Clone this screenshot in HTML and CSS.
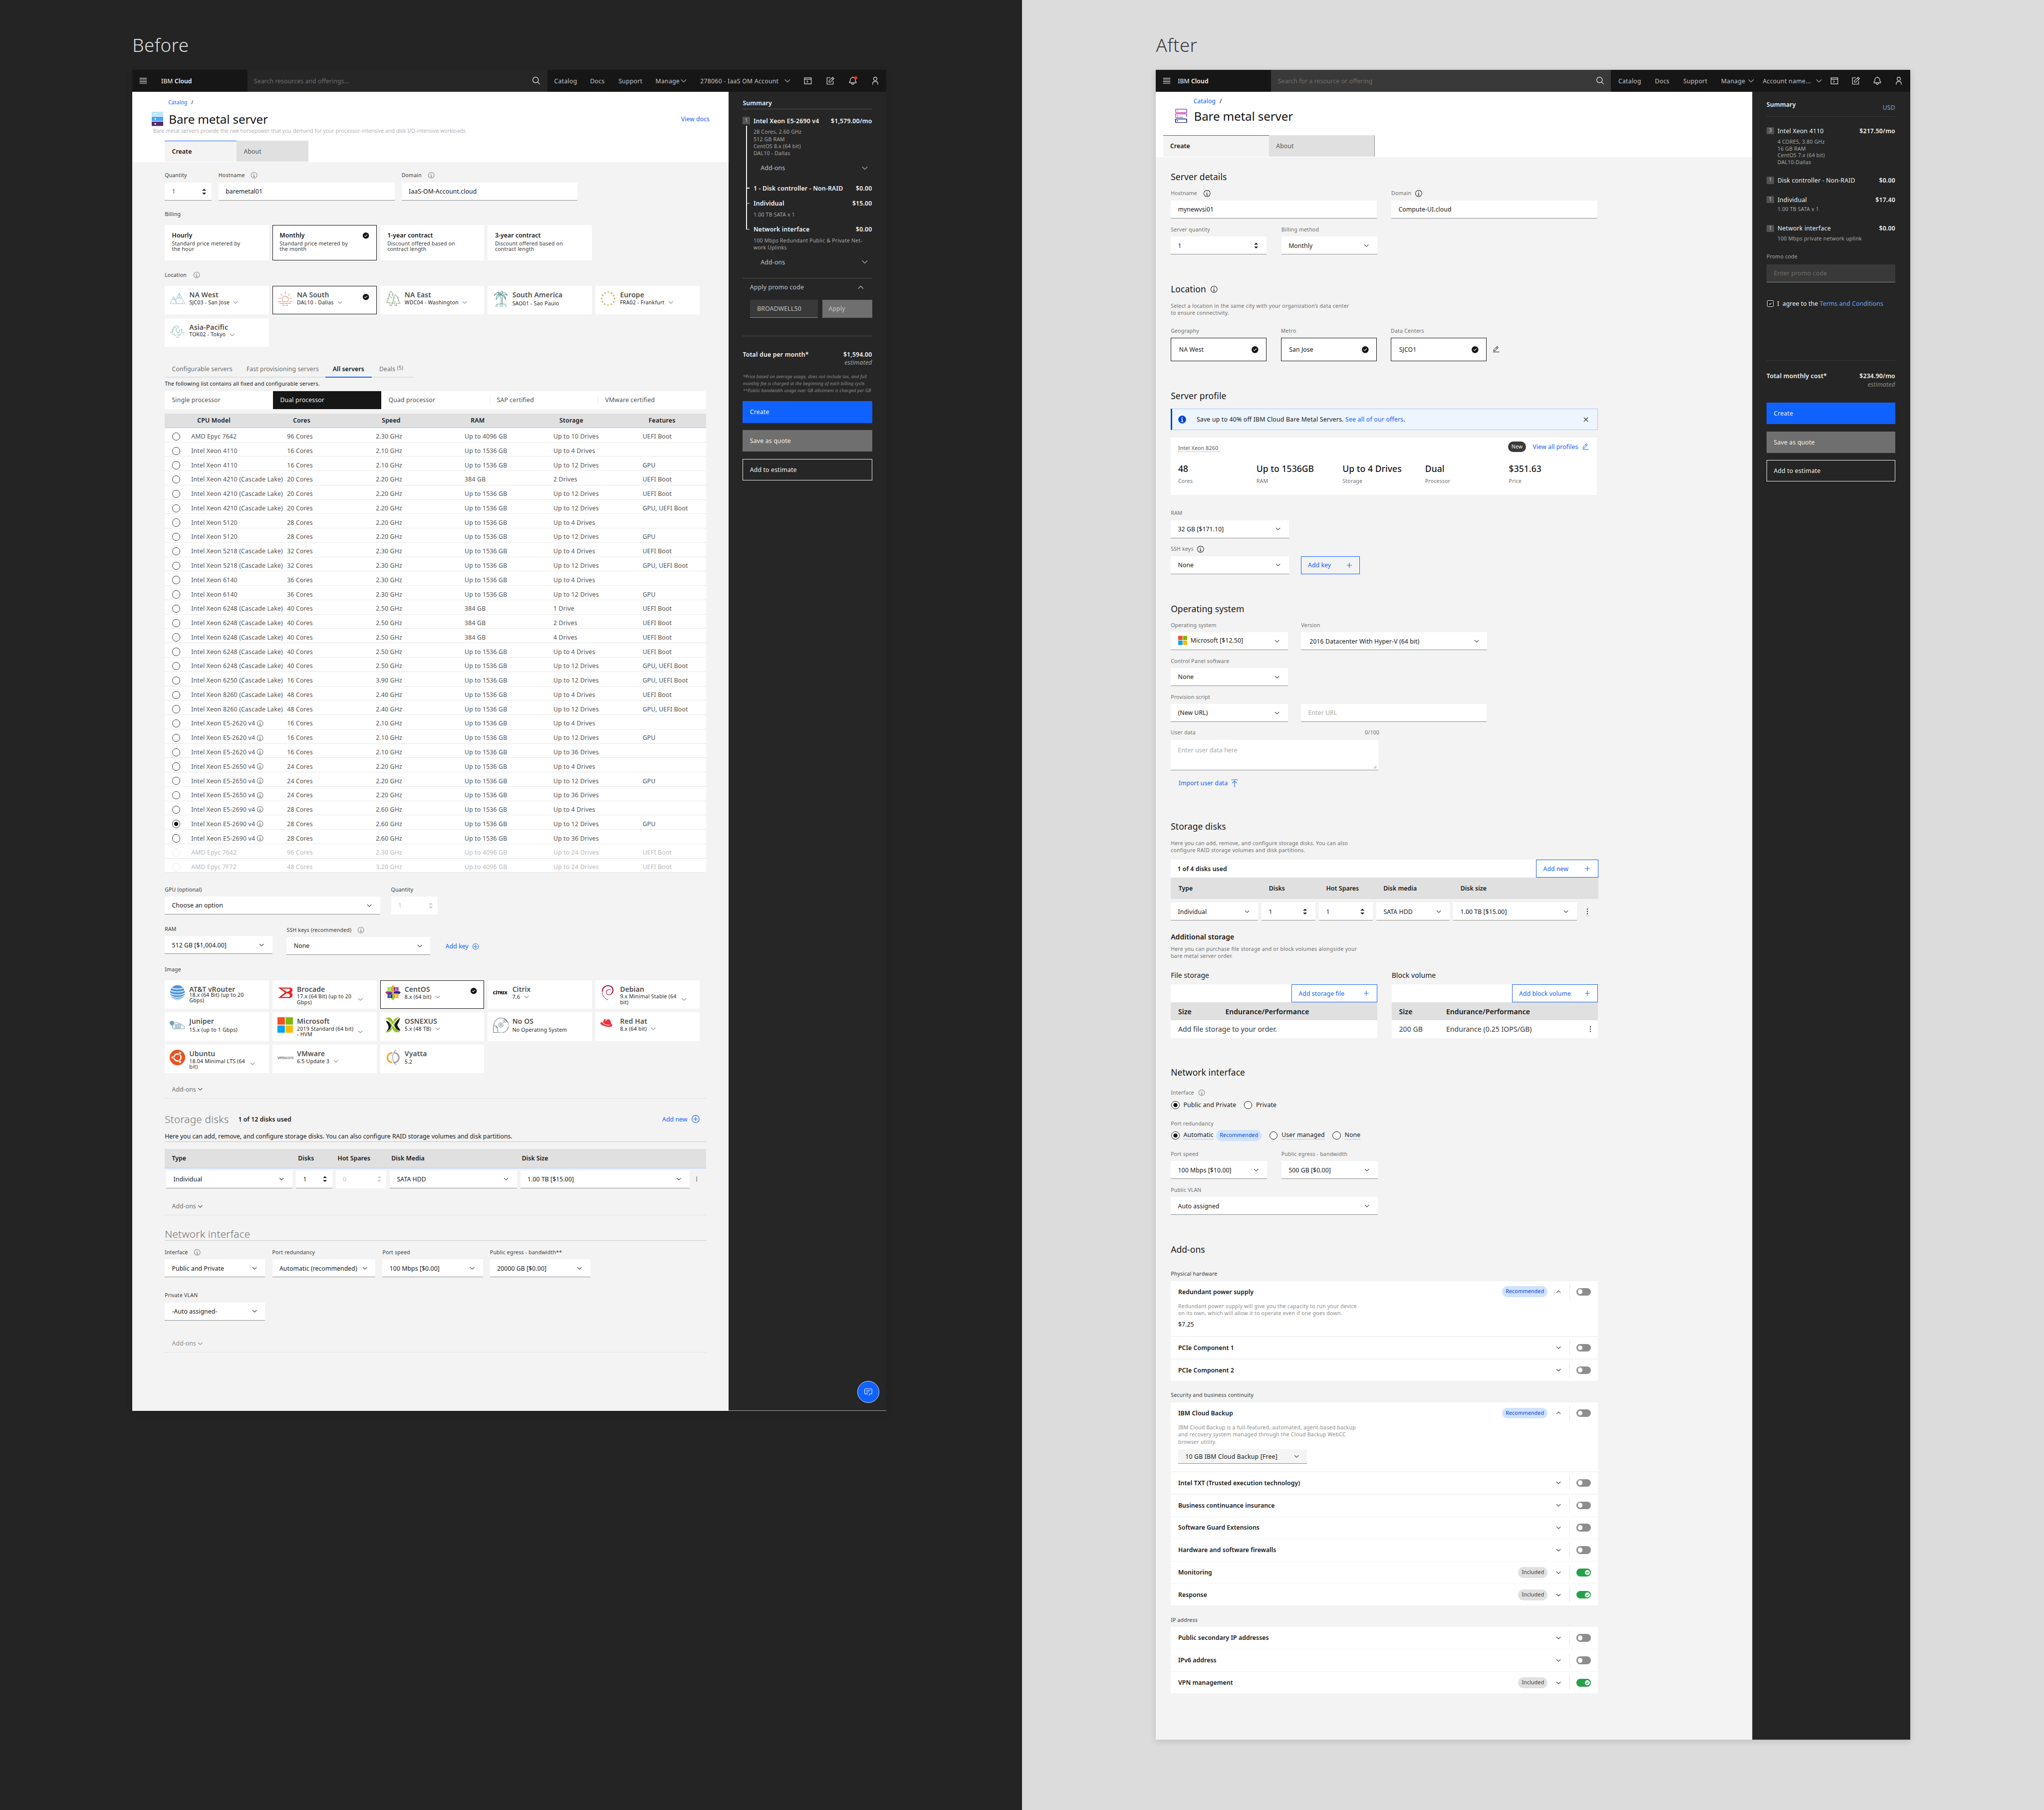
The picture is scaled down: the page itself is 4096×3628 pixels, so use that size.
FILE: index.html
```html
<!DOCTYPE html>
<html lang="en">
<head>
<meta charset="utf-8">
<title>Bare metal server – before and after</title>
<link rel="stylesheet" href="styles.css">
</head>
<body>
<svg class="defs" aria-hidden="true">
  <defs>
    <linearGradient id="pinkviolet" x1="0" y1="1" x2="1" y2="0"><stop offset="0" stop-color="#ee5396"/><stop offset="1" stop-color="#8a3ffc"/></linearGradient>
  </defs>
  <symbol id="down" viewBox="0 0 32 32"><path d="M16 22 6 12l1.4-1.4 8.6 8.6 8.6-8.6L26 12z"/></symbol>
  <symbol id="up" viewBox="0 0 32 32"><path d="M16 10 26 20l-1.4 1.4-8.6-8.6-8.6 8.6L6 20z"/></symbol>
  <symbol id="info" viewBox="0 0 32 32"><path d="M17 22v-8h-4v2h2v6h-3v2h8v-2zM16 8a1.5 1.5 0 1 0 1.5 1.5A1.5 1.5 0 0 0 16 8zM16 30a14 14 0 1 1 14-14 14 14 0 0 1-14 14zm0-26a12 12 0 1 0 12 12A12 12 0 0 0 16 4z"/></symbol>
  <symbol id="info-filled" viewBox="0 0 32 32"><path fill-rule="evenodd" d="M16 2a14 14 0 1 0 14 14A14 14 0 0 0 16 2zm0 5a2 2 0 1 1-2 2 2 2 0 0 1 2-2zm4.500 17.500h-9v-2.500h3.200v-6.500h-2.200V13H17.500v9h3z"/></symbol>
  <symbol id="check" viewBox="0 0 32 32"><path fill-rule="evenodd" d="M16 2a14 14 0 1 0 14 14A14 14 0 0 0 16 2zm-2 19.600-5-5 1.600-1.600L14 18.400 21.400 11l1.600 1.600z"/></symbol>
  <symbol id="carets" viewBox="0 0 12 18"><path d="M0 6 6 .500 12 6zM0 12l6 5.500L12 12z"/></symbol>
  <symbol id="search" viewBox="0 0 32 32"><path d="m29 27.600-7.600-7.600a11 11 0 1 0-1.400 1.400l7.600 7.600zM4 13a9 9 0 1 1 9 9 9 9 0 0 1-9-9z"/></symbol>
  <symbol id="menu" viewBox="0 0 32 32"><path d="M3 6h26v2H3zM3 12h26v2H3zM3 18h26v2H3zM3 24h26v2H3z"/></symbol>
  <symbol id="terminal" viewBox="0 0 32 32"><path d="M4 5h24v22H4zM4 10h24M12 15l4 3.500-4 3.500" fill="none" stroke="currentColor" stroke-width="2"/></symbol>
  <symbol id="note" viewBox="0 0 32 32"><path d="M16 5H4v23h22V17M11 21v-5L24.500 3l4.500 4.500L16 21zM21 6.500l4.500 4.500" fill="none" stroke="currentColor" stroke-width="2"/></symbol>
  <symbol id="bell" viewBox="0 0 32 32"><path d="M28.700 19.300 26 16.600V13a10 10 0 0 0-9-9.950V1h-2v2.050A10 10 0 0 0 6 13v3.600l-2.700 2.700A1 1 0 0 0 3 20v3a1 1 0 0 0 1 1h7v1a5 5 0 0 0 10 0v-1h7a1 1 0 0 0 1-1v-3a1 1 0 0 0-.300-.700zM19 25a3 3 0 0 1-6 0v-1h6zm8-3H5v-1.600l2.700-2.700A1 1 0 0 0 8 17v-4a8 8 0 0 1 16 0v4a1 1 0 0 0 .300.700L27 20.400z"/></symbol>
  <symbol id="user" viewBox="0 0 32 32"><path d="M16 4a5 5 0 1 1-5 5 5 5 0 0 1 5-5m0-2a7 7 0 1 0 7 7 7 7 0 0 0-7-7zm10 28h-2v-5a5 5 0 0 0-5-5h-6a5 5 0 0 0-5 5v5H6v-5a7 7 0 0 1 7-7h6a7 7 0 0 1 7 7z"/></symbol>
  <symbol id="edit" viewBox="0 0 32 32"><path fill-rule="evenodd" d="M2 27h28v2H2zM25.400 9a2 2 0 0 0 0-2.800l-3.600-3.600a2 2 0 0 0-2.800 0l-15 15V24h6.400zM20.400 4 24 7.600l-3 3L17.400 7zM6 22v-3.600l10-10 3.600 3.600-10 10z"/></symbol>
  <symbol id="plus" viewBox="0 0 32 32"><path d="M17 15V7h-2v8H7v2h8v8h2v-8h8v-2z"/></symbol>
  <symbol id="plus-circle" viewBox="0 0 32 32"><path d="M16 4a12 12 0 1 1-12 12A12 12 0 0 1 16 4m0-2a14 14 0 1 0 14 14A14 14 0 0 0 16 2zm8 13h-7V8h-2v7H8v2h7v7h2v-7h7z"/></symbol>
  <symbol id="close" viewBox="0 0 32 32"><path d="M24 9.400 22.600 8 16 14.600 9.400 8 8 9.400l6.600 6.600L8 22.600 9.400 24l6.600-6.600 6.600 6.600 1.400-1.400-6.600-6.600z"/></symbol>
  <symbol id="upload" viewBox="0 0 32 32"><path d="M4 3.500h24M16 30V8M8 16l8-8 8 8" fill="none" stroke="currentColor" stroke-width="2"/></symbol>
  <symbol id="dots" viewBox="0 0 32 32"><circle cx="16" cy="8" r="2"/><circle cx="16" cy="16" r="2"/><circle cx="16" cy="24" r="2"/></symbol>
  <symbol id="chat" viewBox="0 0 32 32"><path d="M18 29l4-6h4a3 3 0 0 0 3-3V8a3 3 0 0 0-3-3H6a3 3 0 0 0-3 3v12a3 3 0 0 0 3 3h9M9 11.500h14M9 16.500h9" fill="none" stroke="currentColor" stroke-width="2"/></symbol>
  <symbol id="windows" viewBox="0 0 40 40"><path fill="#f25022" d="M0 0h19v19H0z"/><path fill="#7fba00" d="M21 0h19v19H21z"/><path fill="#00a4ef" d="M0 21h19v19H0z"/><path fill="#ffb900" d="M21 21h19v19H21z"/></symbol>
</svg>

<section class="side before">
  <h1>Before</h1>
  <div class="board">
    <header class="nav">
      <div class="nav-brand"><svg class="i20"><use href="#menu"/></svg><span>IBM <b>Cloud</b></span></div>
      <div class="nav-search"><span>Search resources and offerings...</span><svg class="i20"><use href="#search"/></svg></div>
      <div class="nav-links">
        <span class="n-catalog">Catalog</span><span class="n-docs">Docs</span><span class="n-support">Support</span>
        <span class="n-manage">Manage</span><svg class="i20"><use href="#down"/></svg>
        <span class="n-account">278060 - IaaS OM Account</span><svg class="i20"><use href="#down"/></svg>
        <div class="nav-icons"><svg class="i20"><use href="#terminal"/></svg><svg class="i20"><use href="#note"/></svg><span class="alert"><svg class="i20"><use href="#bell"/></svg></span><svg class="i20"><use href="#user"/></svg></div>
      </div>
    </header>
    <div class="cols">
      <main>
        <div class="masthead">
          <div class="crumbs"><a>Catalog</a><span>/</span></div>
          <div class="title-row">
            <svg class="product" viewBox="0 0 30 36"><path fill="#bae6ff" d="M0 0h30v11H0z"/><path fill="#4ba3f5" d="M0 12.500h30v11H0z"/><path fill="#53296b" d="M0 25h30v11H0z"/><g fill="#fff"><circle cx="9" cy="5.500" r="2"/><circle cx="9" cy="18" r="2"/><circle cx="9" cy="30.500" r="2"/></g></svg>
            <h2>Bare metal server</h2><a class="docs">View docs</a>
          </div>
          <p class="tagline">Bare metal servers provide the raw horsepower that you demand for your processor-intensive and disk I/O-intensive workloads.</p>
          <div class="tabs"><b>Create</b><span>About</span></div>
        </div>

        <div class="body">
          <div class="row r-host">
            <div class="field w120"><label>Quantity</label><div class="box num dim">1<svg class="carets"><use href="#carets"/></svg></div></div>
            <div class="field w452"><label>Hostname<svg class="i16"><use href="#info"/></svg></label><div class="box">baremetal01</div></div>
            <div class="field w452"><label>Domain<svg class="i16"><use href="#info"/></svg></label><div class="box">IaaS-OM-Account.cloud</div></div>
          </div>

          <div class="label l-billing">Billing</div>
          <div class="tiles billing">
            <div class="plan"><b>Hourly</b><p>Standard price metered by<br>the hour</p></div>
            <div class="plan on"><b>Monthly</b><p>Standard price metered by<br>the month</p><svg class="i16 tick"><use href="#check"/></svg></div>
            <div class="plan"><b>1-year contract</b><p>Discount offered based on<br>contract length</p></div>
            <div class="plan"><b>3-year contract</b><p>Discount offered based on<br>contract length</p></div>
          </div>

          <div class="label l-location">Location<svg class="i16"><use href="#info"/></svg></div>
          <div class="tiles">
            <div class="tile"><svg class="logo line" viewBox="0 0 40 40" stroke="#a3bfe8"><path d="M1 33h38L24.500 6 14 26M1 33l9.500-18 8.500 18M8 20l2.500 3 2.500-3M19 16l3 4 2.500-4 3 4 2.500-4M24.500 6v9M14 26l5 7M32 28v5"/></svg><div><b>NA West</b><div class="sub">SJC03 - San Jose<svg class="i16"><use href="#down"/></svg></div></div></div>
            <div class="tile on"><svg class="logo line" viewBox="0 0 40 40" stroke="#d0805a"><path d="M1 28h9M30 28h9M12 28h16M5 32.500h30M13 37h6M22 37h5M13.500 26a8 8 0 1 1 13 0M20 2v6M8.500 8l4 4M31.500 8l-4 4M3 19h6M31 19h6"/></svg><div><b>NA South</b><div class="sub">DAL10 - Dallas<svg class="i16"><use href="#down"/></svg></div></div><svg class="i16 tick"><use href="#check"/></svg></div>
            <div class="tile"><svg class="logo line" viewBox="0 0 40 40" stroke="#86a47c"><path d="M15 0 9 10h3L6 19h3L3 30h9v8h5v-8h3M15 0l6 10h-3l2 4M26 10l-5 8h3l-4 6h2l-5 8h8v6h4v-6h9l-5-8h2l-4-6h3zM12 14l4 4M22 28l6 1"/></svg><div><b>NA East</b><div class="sub">WDC04 - Washington<svg class="i16"><use href="#down"/></svg></div></div></div>
            <div class="tile"><svg class="logo line" viewBox="0 0 40 40" stroke="#4b8b80"><path d="M20 11C17 3 7 3 3 12c5-4 9-4 13-1-6 0-9 4-8 11 3-5 6-8 12-11 3-8 12-9 17 1-5-4-9-4-13-1 6 1 9 5 8 11-2-5-6-9-12-11 4-3 6-6 4-10-4 1-6 5-4 10-1-5-4-7-8-8 1 4 3 7 8 8zM19 14c3 8 3 14 0 22M23 15c2 8 2 14 0 21M8 36c3-3 21-4 26 0M6 39h7M17 39h9M30 39h5"/></svg><div><b>South America</b><div class="sub loose">SAO01 - Sao Paulo</div></div></div>
            <div class="tile"><svg class="logo" viewBox="0 0 40 40"><circle cx="20" cy="20" r="16.500" fill="none" stroke="#d3bb6a" stroke-width="4.500" stroke-linecap="round" stroke-dasharray="0.100 8.539"/></svg><div><b>Europe</b><div class="sub">FRA02 - Frankfurt<svg class="i16"><use href="#down"/></svg></div></div></div>
            <div class="tile"><svg class="logo line" viewBox="0 0 40 40" stroke="#8dbdb5"><path d="M1 25h5c0-8 4-17 13-17 4 0 5 4 1 5-5 0-5 8 0 12h4c0-5 3-9 7-8 2 1 1 3-1 3-2 2 0 4 2 5h7M8 25c0-6 3-12 8-14M4 29h10M18 29h12M33 29h4M10 33h6M20 33h8M17 37h6"/></svg><div><b>Asia-Pacific</b><div class="sub">TOK02 - Tokyo<svg class="i16"><use href="#down"/></svg></div></div></div>
          </div>

          <div class="subtabs"><span>Configurable servers</span><span>Fast provisioning servers</span><b>All servers</b><span>Deals <sup>(5)</sup></span></div>
          <p class="note">The following list contains all fixed and configurable servers.</p>
          <div class="switcher"><span>Single processor</span><span class="sel">Dual processor</span><span>Quad processor</span><span class="cut">SAP certified</span><span class="cut">VMware certified</span></div>

          <table class="servers">
            <thead><tr><th></th><th>CPU Model</th><th>Cores</th><th>Speed</th><th>RAM</th><th>Storage</th><th>Features</th></tr></thead>
            <tbody>
              <tr><td><i></i></td><td>AMD Epyc 7642</td><td>96 Cores</td><td>2.30 GHz</td><td>Up to 4096 GB</td><td>Up to 10 Drives</td><td>UEFI Boot</td></tr>
              <tr><td><i></i></td><td>Intel Xeon 4110</td><td>16 Cores</td><td>2.10 GHz</td><td>Up to 1536 GB</td><td>Up to 4 Drives</td><td></td></tr>
              <tr><td><i></i></td><td>Intel Xeon 4110</td><td>16 Cores</td><td>2.10 GHz</td><td>Up to 1536 GB</td><td>Up to 12 Drives</td><td>GPU</td></tr>
              <tr><td><i></i></td><td>Intel Xeon 4210 (Cascade Lake)</td><td>20 Cores</td><td>2.20 GHz</td><td>384 GB</td><td>2 Drives</td><td>UEFI Boot</td></tr>
              <tr><td><i></i></td><td>Intel Xeon 4210 (Cascade Lake)</td><td>20 Cores</td><td>2.20 GHz</td><td>Up to 1536 GB</td><td>Up to 12 Drives</td><td>UEFI Boot</td></tr>
              <tr><td><i></i></td><td>Intel Xeon 4210 (Cascade Lake)</td><td>20 Cores</td><td>2.20 GHz</td><td>Up to 1536 GB</td><td>Up to 12 Drives</td><td>GPU, UEFI Boot</td></tr>
              <tr><td><i></i></td><td>Intel Xeon 5120</td><td>28 Cores</td><td>2.20 GHz</td><td>Up to 1536 GB</td><td>Up to 4 Drives</td><td></td></tr>
              <tr><td><i></i></td><td>Intel Xeon 5120</td><td>28 Cores</td><td>2.20 GHz</td><td>Up to 1536 GB</td><td>Up to 12 Drives</td><td>GPU</td></tr>
              <tr><td><i></i></td><td>Intel Xeon 5218 (Cascade Lake)</td><td>32 Cores</td><td>2.30 GHz</td><td>Up to 1536 GB</td><td>Up to 4 Drives</td><td>UEFI Boot</td></tr>
              <tr><td><i></i></td><td>Intel Xeon 5218 (Cascade Lake)</td><td>32 Cores</td><td>2.30 GHz</td><td>Up to 1536 GB</td><td>Up to 12 Drives</td><td>GPU, UEFI Boot</td></tr>
              <tr><td><i></i></td><td>Intel Xeon 6140</td><td>36 Cores</td><td>2.30 GHz</td><td>Up to 1536 GB</td><td>Up to 4 Drives</td><td></td></tr>
              <tr><td><i></i></td><td>Intel Xeon 6140</td><td>36 Cores</td><td>2.30 GHz</td><td>Up to 1536 GB</td><td>Up to 12 Drives</td><td>GPU</td></tr>
              <tr><td><i></i></td><td>Intel Xeon 6248 (Cascade Lake)</td><td>40 Cores</td><td>2.50 GHz</td><td>384 GB</td><td>1 Drive</td><td>UEFI Boot</td></tr>
              <tr><td><i></i></td><td>Intel Xeon 6248 (Cascade Lake)</td><td>40 Cores</td><td>2.50 GHz</td><td>384 GB</td><td>2 Drives</td><td>UEFI Boot</td></tr>
              <tr><td><i></i></td><td>Intel Xeon 6248 (Cascade Lake)</td><td>40 Cores</td><td>2.50 GHz</td><td>384 GB</td><td>4 Drives</td><td>UEFI Boot</td></tr>
              <tr><td><i></i></td><td>Intel Xeon 6248 (Cascade Lake)</td><td>40 Cores</td><td>2.50 GHz</td><td>Up to 1536 GB</td><td>Up to 4 Drives</td><td>UEFI Boot</td></tr>
              <tr><td><i></i></td><td>Intel Xeon 6248 (Cascade Lake)</td><td>40 Cores</td><td>2.50 GHz</td><td>Up to 1536 GB</td><td>Up to 12 Drives</td><td>GPU, UEFI Boot</td></tr>
              <tr><td><i></i></td><td>Intel Xeon 6250 (Cascade Lake)</td><td>16 Cores</td><td>3.90 GHz</td><td>Up to 1536 GB</td><td>Up to 12 Drives</td><td>GPU, UEFI Boot</td></tr>
              <tr><td><i></i></td><td>Intel Xeon 8260 (Cascade Lake)</td><td>48 Cores</td><td>2.40 GHz</td><td>Up to 1536 GB</td><td>Up to 4 Drives</td><td>UEFI Boot</td></tr>
              <tr><td><i></i></td><td>Intel Xeon 8260 (Cascade Lake)</td><td>48 Cores</td><td>2.40 GHz</td><td>Up to 1536 GB</td><td>Up to 12 Drives</td><td>GPU, UEFI Boot</td></tr>
              <tr><td><i></i></td><td>Intel Xeon E5-2620 v4<svg class="i16"><use href="#info"/></svg></td><td>16 Cores</td><td>2.10 GHz</td><td>Up to 1536 GB</td><td>Up to 4 Drives</td><td></td></tr>
              <tr><td><i></i></td><td>Intel Xeon E5-2620 v4<svg class="i16"><use href="#info"/></svg></td><td>16 Cores</td><td>2.10 GHz</td><td>Up to 1536 GB</td><td>Up to 12 Drives</td><td>GPU</td></tr>
              <tr><td><i></i></td><td>Intel Xeon E5-2620 v4<svg class="i16"><use href="#info"/></svg></td><td>16 Cores</td><td>2.10 GHz</td><td>Up to 1536 GB</td><td>Up to 36 Drives</td><td></td></tr>
              <tr><td><i></i></td><td>Intel Xeon E5-2650 v4<svg class="i16"><use href="#info"/></svg></td><td>24 Cores</td><td>2.20 GHz</td><td>Up to 1536 GB</td><td>Up to 4 Drives</td><td></td></tr>
              <tr><td><i></i></td><td>Intel Xeon E5-2650 v4<svg class="i16"><use href="#info"/></svg></td><td>24 Cores</td><td>2.20 GHz</td><td>Up to 1536 GB</td><td>Up to 12 Drives</td><td>GPU</td></tr>
              <tr><td><i></i></td><td>Intel Xeon E5-2650 v4<svg class="i16"><use href="#info"/></svg></td><td>24 Cores</td><td>2.20 GHz</td><td>Up to 1536 GB</td><td>Up to 36 Drives</td><td></td></tr>
              <tr><td><i></i></td><td>Intel Xeon E5-2690 v4<svg class="i16"><use href="#info"/></svg></td><td>28 Cores</td><td>2.60 GHz</td><td>Up to 1536 GB</td><td>Up to 4 Drives</td><td></td></tr>
              <tr><td><i class="picked"></i></td><td>Intel Xeon E5-2690 v4<svg class="i16"><use href="#info"/></svg></td><td>28 Cores</td><td>2.60 GHz</td><td>Up to 1536 GB</td><td>Up to 12 Drives</td><td>GPU</td></tr>
              <tr><td><i></i></td><td>Intel Xeon E5-2690 v4<svg class="i16"><use href="#info"/></svg></td><td>28 Cores</td><td>2.60 GHz</td><td>Up to 1536 GB</td><td>Up to 36 Drives</td><td></td></tr>
              <tr class="off"><td><i></i></td><td>AMD Epyc 7642</td><td>96 Cores</td><td>2.30 GHz</td><td>Up to 4096 GB</td><td>Up to 24 Drives</td><td>UEFI Boot</td></tr>
              <tr class="off"><td><i></i></td><td>AMD Epyc 7F72</td><td>48 Cores</td><td>3.20 GHz</td><td>Up to 4096 GB</td><td>Up to 24 Drives</td><td>UEFI Boot</td></tr>
            </tbody>
          </table>

          <div class="row r-gpu">
            <div class="field w553"><label>GPU (optional)</label><div class="box">Choose an option<svg class="i16"><use href="#down"/></svg></div></div>
            <div class="field w120"><label>Quantity</label><div class="box num disabled">1<svg class="carets"><use href="#carets"/></svg></div></div>
          </div>
          <div class="row r-ram">
            <div class="field w276"><label>RAM</label><div class="box">512 GB [$1,004.00]<svg class="i16"><use href="#down"/></svg></div></div>
            <div class="field w368 ssh"><label>SSH keys (recommended)<svg class="i16"><use href="#info"/></svg></label><div class="box">None<svg class="i16"><use href="#down"/></svg></div></div>
            <a class="addkey">Add key<svg class="i16"><use href="#plus-circle"/></svg></a>
          </div>

          <div class="label l-image">Image</div>
          <div class="tiles">
            <div class="tile"><svg class="logo" viewBox="0 0 40 40"><circle cx="20" cy="20" r="19" fill="#4f95dc"/><g fill="none" stroke="#fff" stroke-width="2"><path d="M5 7c4 5 26 5 30 0M1 13c6 7 32 7 38 0M0 20c7 8 33 8 40 0M2 27c7 7 29 7 36 0M7 33c6 5 20 5 26 0"/></g></svg><div><b>AT&amp;T vRouter</b><div class="sub tight">18.x (64 Bit) (up to 20<br>Gbps)</div></div></div>
            <div class="tile"><svg class="logo" viewBox="0 0 40 40"><path d="M2 7h30c9 1 8 10 3 12.500 6 3 5 14-4 14.500H2l17-14zM11 10l13 8c8-1 11-8 5-8zM24 21.500 11 31h17c7 0 5-9-4-9.500z" fill="#e8252b" fill-rule="evenodd"/></svg><div><b>Brocade</b><div class="sub two"><span>17.x (64 Bit) (up to 20<br>Gbps)</span><svg class="i16"><use href="#down"/></svg></div></div></div>
            <div class="tile on"><svg class="logo" viewBox="0 0 40 40"><path fill="#8ccf2d" d="M6 6h13v13H6z"/><path fill="#a2308c" d="M21 6h13v13H21z"/><path fill="#2a2a86" d="M6 21h13v13H6z"/><path fill="#f0a52b" d="M21 21h13v13H21z"/><path fill="#f0a52b" d="m20 0 5 6h-3v13h-4V6h-3z"/><path fill="#8ccf2d" d="m20 40 5-6h-3V21h-4v13h-3z"/><path fill="#a2308c" d="m0 20 6-5v3h13v4H6v3z"/><path fill="#2a2a86" d="m40 20-6-5v3H21v4h13v3z"/><path d="M8 8l24 24M32 8 8 32M13 6v8H6M27 6v8h7M13 34v-8H6M27 34v-8h7" fill="none" stroke="#fff"/></svg><div><b>CentOS</b><div class="sub">8.x (64 bit)<svg class="i16"><use href="#down"/></svg></div></div><svg class="i16 tick"><use href="#check"/></svg></div>
            <div class="tile"><span class="wordmark citrix">CİTRIX</span><div><b>Citrix</b><div class="sub">7.6<svg class="i16"><use href="#down"/></svg></div></div></div>
            <div class="tile"><svg class="logo line" viewBox="0 0 40 40" stroke="#a80030"><path stroke-width="1.200" d="M20 39C9 34 4 26 5 16"/><path stroke-width="2.600" d="M5 17C6 5 17-1 27 4c7 4 7 14 2 18"/><path stroke-width="1.400" d="M30 21c-4 7-15 6-15-2 0-6 8-9 12-5"/></svg><div><b>Debian</b><div class="sub two"><span>9.x Minimal Stable (64<br>bit)</span><svg class="i16"><use href="#down"/></svg></div></div></div>
            <div class="tile"><svg class="logo" viewBox="0 0 40 40"><path d="M8 9c-4 1-8 0-8 5 0 4 4 6 6 8 2-2 6-4 5-9 0-3-1-3-3-4z" fill="#6f9fb5"/><path d="M11 30a6 6 0 0 1-1-11c1-6 10-9 14-2 5-1 9 2 9 5 6 0 7 8 1 8z" fill="#fff" stroke="#8fb0c4" stroke-width="1.600"/><path d="M14 18h14v10H14zM14 21.500h14M14 25h14M18 18v10M23 18v10" fill="none" stroke="#7fa3b8" stroke-width="1.300"/></svg><div><b>Juniper</b><div class="sub loose">15.x (up to 1 Gbps)</div></div></div>
            <div class="tile"><svg class="logo"><use href="#windows"/></svg><div><b>Microsoft</b><div class="sub two"><span>2019 Standard (64 bit)<br>- HVM</span><svg class="i16"><use href="#down"/></svg></div></div></div>
            <div class="tile"><svg class="logo" viewBox="0 0 40 40"><path fill="#8fc02a" d="M1 3c9-5 16-2 19 9 2-7 7-12 17-12-7 3-9 8-12 16-2 6 3 16 13 21-9 4-17 1-19-9-3 7-9 12-17 11 8-5 11-10 12-17C15 13 8 5 1 3z"/><path fill="#15171a" d="M2 9c8 1 11 7 13 13 0 7-6 10-13 17 3-6 8-11 6-17C7 17 3 14 2 9zM38 1c-1 7-4 13-7 18 0 6 6 9 8 16-9-1-14-8-15-15 2-8 8-13 14-19z"/><path d="M12 10l14 19M26 9 14 29" stroke="#fff" stroke-width="1.500"/></svg><div><b>OSNEXUS</b><div class="sub">5.x (48 TB)<svg class="i16"><use href="#down"/></svg></div></div></div>
            <div class="tile"><svg class="logo line" viewBox="0 0 40 40" stroke="#64788a"><path d="M2 21a19 19 0 1 1 12 17.500M1 22h7l4 5v12H1zM8 22v5h4M26 8c3 1 5 3 6 6M28 4.500c3 1.500 6 4 7.500 7.500M25 12c1.500.500 2.500 1.500 3 3"/><circle cx="20" cy="20" r="5.500"/><circle cx="20" cy="20" r="2"/></svg><div><b>No OS</b><div class="sub loose">No Operating System</div></div></div>
            <div class="tile"><svg class="logo" viewBox="0 0 40 40"><path fill="#ee3040" d="M7 14c1-5 2-9 4-9l5 1 6-1c4 1 5 7 6 12 5 3 3 8-5 8C14 25 0 20 0 15.500 0 13 3 12.500 7 14z"/><path d="M7 14c3 5 12 7 18 6M12 9l5-1" stroke="#fff" stroke-width="1.300" fill="none"/></svg><div><b>Red Hat</b><div class="sub">8.x (64 bit)<svg class="i16"><use href="#down"/></svg></div></div></div>
            <div class="tile"><svg class="logo" viewBox="0 0 40 40"><circle cx="20" cy="20" r="20" fill="#e95420"/><circle cx="20" cy="20" r="9" fill="none" stroke="#fff" stroke-width="3.500"/><path d="M20 20H4M20 20l8-14M20 20l8 14" stroke="#e95420" stroke-width="1.500"/><g fill="#fff" stroke="#e95420"><circle cx="7" cy="20" r="3.200"/><circle cx="26.500" cy="8.500" r="3.200"/><circle cx="26.500" cy="31.500" r="3.200"/></g><circle cx="20" cy="20" r="7" fill="#e95420"/></svg><div><b>Ubuntu</b><div class="sub two"><span>18.04 Minimal LTS (64<br>bit)</span><svg class="i16"><use href="#down"/></svg></div></div></div>
            <div class="tile"><span class="wordmark vmware"><b>vm</b>ware</span><div><b>VMware</b><div class="sub">6.5 Update 3<svg class="i16"><use href="#down"/></svg></div></div></div>
            <div class="tile"><svg class="logo hollow" viewBox="0 0 40 40"><path d="M18 8a12.500 12.500 0 0 0 0 25" stroke="#f7a531" stroke-width="4"/><path d="M23 8a12.500 12.500 0 0 1-1 25" stroke="#a5a8ab" stroke-width="4"/><path d="M28 0c-12 10-12 30 0 39" stroke="#8c8f92" stroke-width="1.500"/></svg><div><b>Vyatta</b><div class="sub loose">5.2</div></div></div>
          </div>
          <div class="addons a-1">Add-ons<svg class="i16"><use href="#down"/></svg></div>

          <div class="heading h-disks"><h3>Storage disks</h3><b>1 of 12 disks used</b><a>Add new<svg class="i20"><use href="#plus-circle"/></svg></a></div>
          <p class="disk-note">Here you can add, remove, and configure storage disks. You can also configure RAID storage volumes and disk partitions.</p>
          <div class="disk-head"><b>Type</b><b>Disks</b><b>Hot Spares</b><b>Disk Media</b><b>Disk Size</b></div>
          <div class="disk-row">
            <div class="box">Individual<svg class="i16"><use href="#down"/></svg></div>
            <div class="box num">1<svg class="carets"><use href="#carets"/></svg></div>
            <div class="box num disabled">0<svg class="carets"><use href="#carets"/></svg></div>
            <div class="box">SATA HDD<svg class="i16"><use href="#down"/></svg></div>
            <div class="box">1.00 TB [$15.00]<svg class="i16"><use href="#down"/></svg></div>
            <svg class="i16"><use href="#dots"/></svg>
          </div>
          <div class="addons a-2">Add-ons<svg class="i16"><use href="#down"/></svg></div>

          <h3 class="h-network">Network interface</h3>
          <div class="row r-net">
            <div class="field w258"><label>Interface<svg class="i16"><use href="#info"/></svg></label><div class="box">Public and Private<svg class="i16"><use href="#down"/></svg></div></div>
            <div class="field w264"><label>Port redundancy</label><div class="box">Automatic (recommended)<svg class="i16"><use href="#down"/></svg></div></div>
            <div class="field w258"><label>Port speed</label><div class="box">100 Mbps [$0.00]<svg class="i16"><use href="#down"/></svg></div></div>
            <div class="field w258"><label>Public egress - bandwidth**</label><div class="box">20000 GB [$0.00]<svg class="i16"><use href="#down"/></svg></div></div>
          </div>
          <div class="row r-vlan">
            <div class="field w258"><label>Private VLAN</label><div class="box">-Auto assigned-<svg class="i16"><use href="#down"/></svg></div></div>
          </div>
          <div class="addons a-3">Add-ons<svg class="i16"><use href="#down"/></svg></div>
        </div>
      </main>

      <aside>
        <b class="sum-title">Summary</b>
        <div class="tree">
          <div class="line-item first"><em>1</em><b>Intel Xeon E5-2690 v4</b><b>$1,579.00/mo</b></div>
          <p class="details d-1">28 Cores, 2.60 GHz<br>512 GB RAM<br>CentOS 8.x (64 bit)<br>DAL10 - Dallas</p>
          <div class="more m-1">Add-ons<svg class="i20"><use href="#down"/></svg></div>
          <div class="line-item disk"><b>1 - Disk controller - Non-RAID</b><b>$0.00</b></div>
          <div class="line-item indiv"><b>Individual</b><b>$15.00</b></div>
          <p class="details">1.00 TB SATA x 1</p>
          <div class="line-item net"><b>Network interface</b><b>$0.00</b></div>
          <p class="details">100 Mbps Redundant Public &amp; Private Net-<br>work Uplinks</p>
          <div class="more m-2">Add-ons<svg class="i20"><use href="#down"/></svg></div>
        </div>
        <div class="promo"><div class="promo-head">Apply promo code<svg class="i20"><use href="#up"/></svg></div><div class="promo-row"><div class="code">BROADWELL50</div><div class="apply">Apply</div></div></div>
        <div class="total"><b>Total due per month*</b><b>$1,594.00</b></div>
        <p class="estimated">estimated</p>
        <p class="fine">*Price based on average usage, does not include tax, and full<br>monthly fee is charged at the beginning of each billing cycle.<br>**Public bandwidth usage over GB allotment is charged per GB</p>
        <div class="actions"><span class="primary">Create</span><span class="secondary">Save as quote</span><span class="outline">Add to estimate</span></div>
        <div class="fab"><svg class="i20"><use href="#chat"/></svg></div>
      </aside>
    </div>
  </div>
</section>

<section class="side after">
  <h1>After</h1>
  <div class="board">
    <header class="nav">
      <div class="nav-brand"><svg class="i20"><use href="#menu"/></svg><span>IBM <b>Cloud</b></span></div>
      <div class="nav-search"><span>Search for a resource or offering</span><svg class="i20"><use href="#search"/></svg></div>
      <div class="nav-links">
        <span class="n-catalog">Catalog</span><span class="n-docs">Docs</span><span class="n-support">Support</span>
        <span class="n-manage">Manage</span><svg class="i20"><use href="#down"/></svg>
        <span class="n-account">Account name...</span><svg class="i20"><use href="#down"/></svg>
        <div class="nav-icons"><svg class="i20"><use href="#terminal"/></svg><svg class="i20"><use href="#note"/></svg><svg class="i20"><use href="#bell"/></svg><svg class="i20"><use href="#user"/></svg></div>
      </div>
    </header>
    <div class="cols">
      <main>
        <div class="masthead">
          <div class="crumbs"><a>Catalog</a><span>/</span></div>
          <div class="title-row">
            <svg class="product hollow" viewBox="0 0 30 36" stroke-width="2"><rect x="1" y="1" width="28" height="9" rx="1" stroke="url(#pinkviolet)"/><path d="M20 22H2a1 1 0 0 1-1-1v-7a1 1 0 0 1 1-1h26a1 1 0 0 1 1 1v7" stroke="url(#pinkviolet)"/><rect x="1" y="26" width="28" height="9" rx="1" stroke="#001d6c"/><g stroke="none"><circle cx="6" cy="5.500" r="1.400" fill="#be5fd0"/><circle cx="6" cy="17.500" r="1.400" fill="#d957b0"/><circle cx="6" cy="30.500" r="1.400" fill="#001d6c"/></g></svg>
            <h2>Bare metal server</h2>
          </div>
          <div class="tabs"><b>Create</b><span>About</span></div>
        </div>

        <div class="body">
          <h3 class="s-details">Server details</h3>
          <div class="row r-a">
            <div class="field w529"><label>Hostname<svg class="i20"><use href="#info"/></svg></label><div class="box">mynewvsi01</div></div>
            <div class="field w529"><label class="close-icon">Domain<svg class="i20"><use href="#info"/></svg></label><div class="box">Compute-UI.cloud</div></div>
          </div>
          <div class="row r-b">
            <div class="field w246"><label>Server quantity</label><div class="box">1<svg class="carets"><use href="#carets"/></svg></div></div>
            <div class="field w246"><label>Billing method</label><div class="box">Monthly<svg class="i16"><use href="#down"/></svg></div></div>
          </div>

          <h3 class="s-gap">Location<svg class="i20"><use href="#info"/></svg></h3>
          <p class="desc">Select a location in the same city with your organization’s data center<br>to ensure connectivity.</p>
          <div class="row r-geo">
            <div class="field w246"><label>Geography</label><div class="pick">NA West<svg class="i20"><use href="#check"/></svg></div></div>
            <div class="field w246"><label>Metro</label><div class="pick">San Jose<svg class="i20"><use href="#check"/></svg></div></div>
            <div class="field w246"><label>Data Centers</label><div class="pick">SJCO1<svg class="i20"><use href="#check"/></svg></div></div>
            <svg class="i16"><use href="#edit"/></svg>
          </div>

          <h3 class="s-gap">Server profile</h3>
          <div class="banner"><svg class="i20"><use href="#info-filled"/></svg><span>Save up to 40% off IBM Cloud Bare Metal Servers. <a>See all of our offers</a>.</span><svg class="i20 x"><use href="#close"/></svg></div>
          <div class="profile">
            <div class="profile-top"><span class="dotted">Intel Xeon 8260</span><span class="pill dark">New</span><a>View all profiles<svg class="i16"><use href="#edit"/></svg></a></div>
            <dl><div><dt>48</dt><dd>Cores</dd></div><div><dt>Up to 1536GB</dt><dd>RAM</dd></div><div><dt>Up to 4 Drives</dt><dd>Storage</dd></div><div><dt>Dual</dt><dd>Processor</dd></div><div><dt>$351.63</dt><dd>Price</dd></div></dl>
          </div>
          <div class="row r-ram2"><div class="field w303"><label>RAM</label><div class="box">32 GB [$171.10]<svg class="i16"><use href="#down"/></svg></div></div></div>
          <div class="row r-ssh2"><div class="field w303"><label class="close-icon">SSH keys<svg class="i20"><use href="#info"/></svg></label><div class="box">None<svg class="i16"><use href="#down"/></svg></div></div><div class="btn w152">Add key<svg class="i20"><use href="#plus"/></svg></div></div>

          <h3 class="s-gap">Operating system</h3>
          <div class="row r-os">
            <div class="field w300"><label>Operating system</label><div class="box"><span class="ms"><svg><use href="#windows"/></svg>Microsoft [$12.50]</span><svg class="i16"><use href="#down"/></svg></div></div>
            <div class="field w478"><label>Version</label><div class="box ver">2016 Datacenter With Hyper-V (64 bit)<svg class="i16"><use href="#down"/></svg></div></div>
          </div>
          <div class="row r-os"><div class="field w300"><label>Control Panel software</label><div class="box">None<svg class="i16"><use href="#down"/></svg></div></div></div>
          <div class="row r-os"><div class="field w300"><label>Provision script</label><div class="box">(New URL)<svg class="i16"><use href="#down"/></svg></div></div><div class="field w476"><label></label><div class="box hint">Enter URL</div></div></div>
          <div class="row r-os"><div class="field w533"><label>User data<span>0/100</span></label><div class="area">Enter user data here<svg viewBox="0 0 10 10"><path d="M1 9 9 1M5.500 9 9 5.500"/></svg></div></div></div>
          <a class="import">Import user data<svg class="i20"><use href="#upload"/></svg></a>

          <h3 class="s-storage">Storage disks</h3>
          <p class="desc">Here you can add, remove, and configure storage disks. You can also<br>configure RAID storage volumes and disk partitions.</p>
          <div class="bar b-disks"><b>1 of 4 disks used</b><div class="btn w160">Add new<svg class="i20"><use href="#plus"/></svg></div></div>
          <div class="disk-head"><b>Type</b><b>Disks</b><b>Hot Spares</b><b>Disk media</b><b>Disk size</b></div>
          <div class="disk-row">
            <div class="box">Individual<svg class="i16"><use href="#down"/></svg></div>
            <div class="box">1<svg class="carets"><use href="#carets"/></svg></div>
            <div class="box">1<svg class="carets"><use href="#carets"/></svg></div>
            <div class="box">SATA HDD<svg class="i16"><use href="#down"/></svg></div>
            <div class="box">1.00 TB [$15.00]<svg class="i16"><use href="#down"/></svg></div>
            <svg class="i20"><use href="#dots"/></svg>
          </div>
          <h4 class="strong">Additional storage</h4>
          <p class="desc d-add">Here you can purchase file storage and or block volumes alongside your<br>bare metal server order.</p>
          <div class="volumes">
            <div class="volume"><h4>File storage</h4><div class="bar"><span></span><div class="btn w219">Add storage file<svg class="i20"><use href="#plus"/></svg></div></div><div class="vhead"><b>Size</b><b>Endurance/Performance</b></div><div class="vrow"><span>Add file storage to your order.</span></div></div>
            <div class="volume"><h4>Block volume</h4><div class="bar"><span></span><div class="btn w221">Add block volume<svg class="i20"><use href="#plus"/></svg></div></div><div class="vhead"><b>Size</b><b>Endurance/Performance</b></div><div class="vrow"><span>200 GB</span><span>Endurance (0.25 IOPS/GB)</span><svg class="i20"><use href="#dots"/></svg></div></div>
          </div>

          <h3 class="s-gap">Network interface</h3>
          <div class="label l-iface">Interface<svg class="i16"><use href="#info"/></svg></div>
          <div class="radios r-1"><i class="picked"></i><span>Public and Private</span><i></i><span>Private</span></div>
          <div class="label l-port">Port redundancy</div>
          <div class="radios r-2"><i class="picked"></i><span class="dotted auto">Automatic</span><span class="pill blue">Recommended</span><i></i><span class="dotted">User managed</span><i></i><span class="dotted">None</span></div>
          <div class="row r-speed"><div class="field w247"><label>Port speed</label><div class="box">100 Mbps [$10.00]<svg class="i16"><use href="#down"/></svg></div></div><div class="field w247"><label>Public egress - bandwidth</label><div class="box">500 GB [$0.00]<svg class="i16"><use href="#down"/></svg></div></div></div>
          <div class="row r-os"><div class="field w531"><label>Public VLAN</label><div class="box">Auto assigned<svg class="i16"><use href="#down"/></svg></div></div></div>

          <h3 class="s-gap">Add-ons</h3>
          <div class="label g-1">Physical hardware</div>
          <div class="group">
            <div class="item"><div class="item-head"><b>Redundant power supply</b><span class="pill blue">Recommended</span><svg class="i16"><use href="#up"/></svg><u></u><s></s></div><p>Redundant power supply will give you the capacity to run your device<br>on its own, which will allow it to operate even if one goes down.</p><div class="price">$7.25</div></div>
            <div class="item"><div class="item-head"><b>PCIe Component 1</b><svg class="i16"><use href="#down"/></svg><u></u><s></s></div></div>
            <div class="item"><div class="item-head"><b>PCIe Component 2</b><svg class="i16"><use href="#down"/></svg><u></u><s></s></div></div>
          </div>
          <div class="label g-2">Security and business continuity</div>
          <div class="group">
            <div class="item"><div class="item-head"><b>IBM Cloud Backup</b><span class="pill blue">Recommended</span><svg class="i16"><use href="#up"/></svg><u></u><s></s></div><p>IBM Cloud Backup is a full-featured, automated, agent-based backup<br>and recovery system managed through the Cloud Backup WebCC<br>browser utility.</p><div class="box backup">10 GB IBM Cloud Backup [Free]<svg class="i16"><use href="#down"/></svg></div></div>
            <div class="item"><div class="item-head"><b>Intel TXT (Trusted execution technology)</b><svg class="i16"><use href="#down"/></svg><u></u><s></s></div></div>
            <div class="item"><div class="item-head"><b>Business continuance insurance</b><svg class="i16"><use href="#down"/></svg><u></u><s></s></div></div>
            <div class="item"><div class="item-head"><b>Software Guard Extensions</b><svg class="i16"><use href="#down"/></svg><u></u><s></s></div></div>
            <div class="item"><div class="item-head"><b>Hardware and software firewalls</b><svg class="i16"><use href="#down"/></svg><u></u><s></s></div></div>
            <div class="item"><div class="item-head"><b>Monitoring</b><span class="pill grey">Included</span><svg class="i16"><use href="#down"/></svg><u></u><s class="yes"><svg viewBox="0 0 10 10"><path d="m2.500 5 1.800 1.800L7.500 3.500"/></svg></s></div></div>
            <div class="item"><div class="item-head"><b>Response</b><span class="pill grey">Included</span><svg class="i16"><use href="#down"/></svg><u></u><s class="yes"><svg viewBox="0 0 10 10"><path d="m2.500 5 1.800 1.800L7.500 3.500"/></svg></s></div></div>
          </div>
          <div class="label g-2">IP address</div>
          <div class="group">
            <div class="item"><div class="item-head"><b>Public secondary IP addresses</b><svg class="i16"><use href="#down"/></svg><u></u><s></s></div></div>
            <div class="item"><div class="item-head"><b>IPv6 address</b><svg class="i16"><use href="#down"/></svg><u></u><s></s></div></div>
            <div class="item"><div class="item-head"><b>VPN management</b><span class="pill grey">Included</span><svg class="i16"><use href="#down"/></svg><u></u><s class="yes"><svg viewBox="0 0 10 10"><path d="m2.500 5 1.800 1.800L7.500 3.500"/></svg></s></div></div>
          </div>
        </div>
      </main>

      <aside>
        <div class="sum-head"><b>Summary</b><a>USD</a></div>
        <div class="line-item q-1"><em>3</em><span>Intel Xeon 4110</span><b>$217.50/mo</b></div>
        <p class="details d-1">4 CORES, 3.80 GHz<br>16 GB RAM<br>CentOS 7.x (64 bit)<br>DAL10-Dallas</p>
        <div class="line-item q-2"><em>1</em><span>Disk controller - Non-RAID</span><b>$0.00</b></div>
        <div class="line-item q-3"><em>1</em><span>Individual</span><b>$17.40</b></div>
        <p class="details d-2">1.00 TB SATA x 1</p>
        <div class="line-item q-4"><em>1</em><span>Network interface</span><b>$0.00</b></div>
        <p class="details d-3">100 Mbps private network uplink</p>
        <div class="promo-label">Promo code</div>
        <div class="code">Enter promo code</div>
        <div class="agree"><svg viewBox="0 0 16 16"><path d="m4.500 8 2.500 2.500 4.500-4.500"/></svg><span>I&nbsp; agree to the <a>Terms and Conditions</a></span></div>
        <div class="total"><b>Total monthly cost*</b><b>$234.90/mo</b></div>
        <p class="estimated">estimated</p>
        <div class="actions"><span class="primary">Create</span><span class="secondary">Save as quote</span><span class="outline">Add to estimate</span></div>
      </aside>
    </div>
  </div>
</section>
</body>
</html>
```
FILE: styles.css
```css
/* 1rem = ten units of the artboard grid */
html { font-size: 7.8049px; }
* { box-sizing: border-box; }
body {
  margin: 0; display: flex; width: 4096px; height: 3628px; overflow: hidden;
  font-family: "Noto Sans", "Open Sans", sans-serif; font-size: 1.57rem; line-height: 2.2rem; letter-spacing: .08px;
  color: #161616; white-space: nowrap;
}
h1, h2, h3, h4, p, dl, dd, dt { margin: 0; font-weight: 400; font-size: inherit; }
b { font-weight: 600; }
a { color: #0f62fe; }
i, em, u, s { font-style: normal; text-decoration: none; }
svg { display: block; fill: currentColor; flex: none; }
.hollow { fill: none; }
.defs { position: absolute; width: 0; height: 0; }
.i16 { width: 1.84rem; height: 1.84rem; }
.i20 { width: 2.3rem; height: 2.3rem; }

/* canvas halves */
.side { width: 262.4rem; height: 464.8rem; padding-top: 8.8rem; }
.before { background: #242424; padding-left: 34rem; }
.after { background: #dcdcdc; padding-left: 34.4rem; }
.side > h1 { height: 5.6rem; margin-bottom: 3.6rem; font-size: 4.7rem; line-height: 5.6rem; font-weight: 300; letter-spacing: .012em; color: #e0e0e0; }
.after > h1 { color: #393939; }
.board { width: 193.6rem; box-shadow: 0 .4rem 1.6rem rgba(0, 0, 0, .14); }
.before .board { height: 344.4rem; }
.after .board { height: 428.8rem; }
.cols { display: flex; }
main { width: 153rem; background: #f3f3f3; }
.before .cols { height: 338.7rem; }
.after .cols { height: 423.2rem; }

/* top navigation */
.nav { display: flex; height: 5.6rem; background: #161616; color: #c6c6c6; }
.nav > div { display: flex; align-items: center; }
.nav-brand { width: 29.5rem; padding-left: 1.6rem; color: #f4f4f4; }
.before .nav-brand span { margin-left: 3.5rem; }
.after .nav-brand span { margin-left: 1.7rem; }
.nav-search { justify-content: space-between; background: #262626; color: #6f6f6f; }
.before .nav-search { width: 77rem; padding: 0 1.6rem 0 1.7rem; }
.after .nav-search { width: 87.3rem; padding: 0 1.6rem 0 1.8rem; background: #393939; }
.nav-search svg, .nav-icons { color: #f4f4f4; }
.nav-links { padding-left: 1.8rem; letter-spacing: .022em; }
.nav-links > span { flex: none; }
.before .n-catalog { width: 9.2rem; }
.before .n-docs { width: 7.3rem; }
.before .n-support { width: 9.5rem; }
.before .n-manage { width: 6.1rem; }
.before .n-account { margin-left: 3.1rem; width: 21.2rem; }
.before .nav-icons { margin-left: 3rem; gap: 3.45rem; }
.after .nav-links { padding-left: 1.9rem; }
.after .n-catalog { width: 9.4rem; }
.after .n-docs { width: 7.3rem; }
.after .n-support { width: 9.7rem; }
.after .n-manage { width: 6.5rem; }
.after .n-account { margin-left: 1.9rem; width: 13.3rem; }
.after .nav-icons { margin-left: 1.7rem; gap: 3.2rem; }
.nav-icons { display: flex; }
.alert { position: relative; }
.alert::after { content: ""; position: absolute; top: 0; right: 0; width: .7rem; height: .7rem; border-radius: 50%; background: #fa2d2d; }

/* page heading */
.masthead { background: #fff; }
.before .masthead { height: 18rem; padding-top: 1.83rem; }
.after .masthead { height: 16.7rem; padding-top: 1.48rem; }
.crumbs { display: flex; height: 1.84rem; line-height: 1.84rem; gap: 1rem; }
.before .crumbs { padding-left: 9.2rem; font-size: 1.345rem; }
.after .crumbs { padding-left: 9.6rem; }
.title-row { display: flex; align-items: center; padding: 0 4.8rem 0 4.9rem; height: 3.2rem; }
.title-row h2 { font-size: 3.1rem; letter-spacing: -.006em; }
.product { width: 3.05rem; height: 3.65rem; margin-right: 1.4rem; }
.docs { margin-left: auto; }
.before .title-row { margin-top: 1.7rem; }
.after .title-row { margin-top: 1.23rem; padding-left: 4.9rem; }
.after .product { margin-right: 1.8rem; }
.tagline { margin: .57rem 0 0 5.3rem; font-size: 1.345rem; line-height: 1.8rem; color: #8d8d8d; font-weight: 300; letter-spacing: .018em; }
.tabs { display: flex; line-height: 5.3rem; }
.tabs > * { padding-left: 1.85rem; }
.tabs b { background: #f3f3f3; border-top: .25rem solid #0f62fe; }
.tabs span { background: #e0e0e0; border-top: .25rem solid #e0e0e0; color: #525252; }
.before .tabs { margin: 1.56rem 0 0 8.3rem; }
.before .tabs > * { width: 18.45rem; }
.after .tabs { margin: 3.35rem 0 0 1.8rem; }
.after .tabs > * { width: 27.2rem; height: 5.6rem; }
.after .tabs span { border-right: .15rem solid #8d8d8d; }

/* form pieces */
.body { padding-left: 8.3rem; }
.after .body { padding-left: 3.8rem; }
.row { display: flex; align-items: flex-start; }
label, .label { display: flex; align-items: center; gap: 1.5rem; height: 1.84rem; line-height: 1.84rem; font-size: 1.345rem; color: #393939; }
label, .label, .plan p, .sub, .note, .details, .desc, .item p, .pill, dd, .promo-label, .profile .dotted, .fine { letter-spacing: .022em; }
label { margin-bottom: .92rem; }
.before label svg, .before .label svg { color: #6f6f6f; }
.after label, .after .label { color: #6f6f6f; }
.after label svg { width: 2rem; height: 2rem; color: #161616; }
.after label.close-icon { gap: .8rem; }
.box { display: flex; align-items: center; justify-content: space-between; height: 4.61rem; padding: .1rem 1.84rem 0; background: #fff; border-bottom: .13rem solid #8d8d8d; }
.carets { width: 1.05rem; height: 1.6rem; margin-right: .35rem; }
.num { padding-right: 1.3rem; }
.num .carets { margin-right: 0; }
.dim { color: #525252; }
.dim svg { color: #161616; }
.disabled { color: #c6c6c6; border-bottom-color: #fff; }
.hint { color: #a8a8a8; }
.w120 { width: 12rem; } .w452 { width: 45.2rem; } .w553 { width: 55.3rem; } .w276 { width: 27.6rem; }
.w368 { width: 36.9rem; } .w258 { width: 25.8rem; } .w264 { width: 26.5rem; } .w529 { width: 52.87rem; }
.w246 { width: 24.6rem; } .w303 { width: 30.3rem; } .w300 { width: 30.05rem; } .w478 { width: 47.8rem; }
.w476 { width: 47.6rem; } .w533 { width: 53.25rem; } .w247 { width: 24.7rem; } .w531 { width: 53.1rem; }
.w152 { width: 15.2rem; } .w160 { width: 16rem; } .w219 { width: 22rem; } .w221 { width: 22.1rem; }

.r-host { padding-top: 2.54rem; gap: 1.8rem; }
.l-billing { margin-top: 2.58rem; }
.tiles { display: grid; grid-template-columns: repeat(5, 26.75rem); gap: .93rem .9rem; margin-top: 1.85rem; }
.plan, .tile { position: relative; background: #fff; }
.plan { height: 9.14rem; padding: 1.57rem 1.85rem; }
.plan b { display: block; line-height: 2.2rem; }
.plan p { margin-top: .32rem; font-size: 1.345rem; line-height: 1.42rem; color: #393939; }
.on { box-shadow: inset 0 0 0 .13rem #161616; }
.tick { position: absolute; right: 1.8rem; top: 1.85rem; }
.l-location { margin-top: 2.84rem; gap: 1.6rem; }
.tile { display: flex; height: 7.34rem; padding: 1.13rem 0 0 1.3rem; }
.tile > div > b { display: block; font-size: 1.79rem; line-height: 2.2rem; color: #525252; }
.logo, .wordmark { width: 4rem; height: 4rem; margin: .1rem 1rem 0 0; }
.line { fill: none; stroke-width: 1.3; }
.wordmark { line-height: 4rem; letter-spacing: -.04em; flex: none; }
.citrix { font-size: 1.16rem; font-weight: 800; color: #000; }
.vmware { font-size: 1.16rem; color: #717074; }
.sub { display: flex; align-items: center; gap: .7rem; margin-top: .2rem; font-size: 1.345rem; line-height: 1.42rem; color: #262626; }
.sub svg { margin: -.2rem 0; color: #6f6f6f; }
.two { gap: 1rem; }
.two span { width: 14.4rem; }
.tight { margin-top: -.25rem; }
.loose { margin-top: .45rem; }

.subtabs { display: flex; gap: .15rem; margin-top: 3.41rem; height: 4.6rem; line-height: 4.7rem; }
.subtabs > * { padding-left: 1.84rem; border-bottom: .3rem solid #e0e0e0; color: #6f6f6f; }
.subtabs > :nth-child(1) { width: 19rem; }
.subtabs > :nth-child(2) { width: 22rem; }
.subtabs > :nth-child(3) { width: 11.8rem; border-color: #0f62fe; color: #161616; }
.subtabs > :nth-child(4) { width: 10.6rem; }
sup { font-size: 1.345rem; line-height: 0; vertical-align: .3em; }
.note { margin-top: .6rem; font-size: 1.345rem; line-height: 1.84rem; }
.switcher { display: flex; width: 139.05rem; height: 4.6rem; margin-top: .96rem; line-height: 4.6rem; background: #fff; border-radius: .5rem; color: #525252; letter-spacing: .012em; }
.switcher span { position: relative; width: 27.82rem; padding-left: 1.84rem; }
.switcher .sel { background: #161616; color: #f4f4f4; }
.cut::before { content: ""; position: absolute; left: 0; top: 1.4rem; width: .13rem; height: 1.85rem; background: #e0e0e0; }

.servers { width: 139rem; margin-top: 1.11rem; table-layout: fixed; border-collapse: separate; border-spacing: 0; color: #525252; letter-spacing: .016em; }
.servers th { height: 3.74rem; padding: 0 0 0 1.55rem; text-align: left; font-weight: 600; color: #161616; background: #e0e0e0; border-bottom: .15rem solid #a6c8ff; line-height: 2rem; }
.servers td { height: 3.687rem; padding: .85rem 0 0; background: #fff; border-bottom: .25rem solid #e8e8e8; line-height: 2rem; }
.servers :is(th, td):nth-child(1) { width: 6.8rem; padding-left: 1.85rem; }
.servers :is(th, td):nth-child(2) { width: 24.6rem; }
.servers :is(th, td):nth-child(3) { width: 22.8rem; }
.servers :is(th, td):nth-child(4) { width: 22.8rem; }
.servers :is(th, td):nth-child(5) { width: 22.8rem; }
.servers :is(th, td):nth-child(6) { width: 22.9rem; }
.servers i, .radios i { display: block; flex: none; width: 2.1rem; height: 2.1rem; border: .16rem solid #393939; border-radius: 50%; background: #fff; }
i.picked { background: radial-gradient(circle, #161616 0 .5rem, #fff .56rem) !important; }
.servers td svg { display: inline-block; margin: -.3rem 0 0 .4rem; vertical-align: middle; }
.servers .off { color: #b8b8b8; }
.servers .off i { border-color: #e8e8e8; }

.r-gpu { margin-top: 3.34rem; gap: 2.8rem; }
.r-ram { margin-top: 2.8rem; height: 7.37rem; gap: 3.7rem; }
.ssh { padding-top: .23rem; }
.addkey { display: flex; align-items: center; gap: .9rem; margin: 4.3rem 0 0 .2rem; }
.l-image { margin-top: 3.04rem; }
.addons { display: flex; align-items: center; width: 139rem; height: 3.6rem; padding: 0 0 1rem 1.84rem; border-bottom: .2rem solid #e0e0e0; color: #6f6f6f; gap: .1rem; }
.addons svg { color: #161616; }
.a-1 { margin-top: 2.9rem; }
.a-2 { margin-top: 3.4rem; }
.a-3 { margin-top: 4.7rem; color: #8d8d8d; }
.a-3 svg { color: #6f6f6f; }
.heading { display: flex; align-items: center; width: 139rem; height: 3.2rem; margin-top: 3.7rem; }
.before h3 { font-size: 2.65rem; line-height: 3.2rem; font-weight: 300; color: #6f6f6f; letter-spacing: .012em; }
.heading b { margin-left: 2.4rem; }
.heading a { display: flex; align-items: center; gap: .9rem; margin: 0 1.6rem 0 auto; }
.disk-note { width: 139rem; height: 2.5rem; margin-top: 1.7rem; border-bottom: .15rem solid #c6c6c6; letter-spacing: 0; }
.disk-head { display: grid; align-items: center; background: #e0e0e0; }
.before .disk-head { grid-template-columns: 32.4rem 10.15rem 13.8rem 33.5rem 1fr; width: 139rem; height: 5rem; margin-top: 1.8rem; padding-left: 1.84rem; border-bottom: .2rem solid #a6c8ff; }
.disk-row { display: grid; align-items: center; }
.before .disk-row { grid-template-columns: 32.4rem 9.3rem 13rem 32.6rem 43.5rem 1.84rem; column-gap: .9rem; margin: .5rem 0 0 .4rem; }
.h-network { width: 139rem; height: 3.3rem; margin-top: 3.16rem; border-bottom: .15rem solid #c6c6c6; }
.r-net { margin-top: 2.08rem; gap: 1.8rem; }
.r-vlan { margin-top: 3.7rem; }

/* order summary */
aside { position: relative; width: 40.6rem; padding: 1.6rem 3.7rem 0; background: #262626; color: #f4f4f4; letter-spacing: .016em; }
.before aside { border-bottom: .1rem solid #a8a8a8; }
.sum-title { display: block; height: 2.85rem; line-height: 2.5rem; border-bottom: .13rem solid #525252; }
.tree { position: relative; padding-left: 2.76rem; border-bottom: .13rem solid #525252; margin-top: 1.9rem; padding-bottom: 2.95rem; }
.tree::before { content: ""; position: absolute; left: .9rem; top: 2.4rem; width: .2rem; height: 26.5rem; background: #f4f4f4; }
.line-item { position: relative; display: flex; justify-content: space-between; height: 2.2rem; }
.line-item em { display: block; background: #525252; text-align: center; color: #c6c6c6; }
.tree .first em { position: absolute; left: -2.76rem; top: 0; width: 1.86rem; height: 1.9rem; line-height: 1.9rem; font-size: 1.345rem; }
:is(.disk, .indiv, .net)::before { content: ""; position: absolute; left: -1.86rem; top: 1.02rem; width: .8rem; height: .16rem; background: #f4f4f4; }
.tree .disk { margin-top: 3rem; }
.tree .indiv { margin-top: 1.72rem; }
.tree .net { margin-top: 1.81rem; }
.details { margin-top: .82rem; font-size: 1.345rem; line-height: 1.84rem; color: #a8a8a8; }
.more { display: flex; align-items: center; justify-content: space-between; height: 2.2rem; margin-top: 1.7rem; padding: 0 .75rem 0 1.85rem; color: #c6c6c6; }
.promo { height: 14.9rem; padding: 1.2rem 0 0 1.85rem; border-bottom: .13rem solid #525252; color: #c6c6c6; }
.promo-head { display: flex; align-items: center; justify-content: space-between; height: 2.2rem; padding-right: 1.7rem; }
.promo-row { display: flex; gap: 1.1rem; margin-top: 2.13rem; line-height: 4.5rem; }
.code { width: 17.5rem; height: 4.61rem; padding-left: 1.84rem; background: #393939; border-bottom: .13rem solid #8d8d8d; }
.apply { flex: 1; padding-left: 1.6rem; background: #6f6f6f; }
.total { display: flex; justify-content: space-between; height: 2.2rem; margin-top: 3.6rem; }
.estimated { text-align: right; font-style: italic; line-height: 2rem; color: #a8a8a8; }
.fine { margin-top: 1.85rem; font-size: 1.12rem; line-height: 1.75rem; font-style: italic; color: #8d8d8d; }
.actions { display: flex; flex-direction: column; gap: 1.87rem; margin-top: 1.8rem; line-height: 5.52rem; }
.actions span { height: 5.52rem; padding-left: 1.84rem; }
.primary { background: #0f62fe; }
.secondary { background: #6f6f6f; }
.actions .outline { border: .13rem solid #f4f4f4; line-height: 5.26rem; padding-left: 1.7rem; }
.fab { position: absolute; right: 1.85rem; bottom: 1.9rem; display: grid; place-items: center; width: 5.6rem; height: 5.6rem; border-radius: 50%; background: #0f62fe; border: .13rem solid #d0e2ff; }

/* redesigned form */
.after h3 { display: flex; align-items: center; gap: 1.1rem; font-size: 2.24rem; line-height: 2.8rem; }
.after h3 svg { width: 2rem; height: 2rem; }
.s-details { padding-top: 3.8rem; }
.s-gap { margin-top: 7.54rem; }
.r-a { margin-top: 1.84rem; gap: 3.75rem; }
.r-b { margin-top: 1.93rem; gap: 3.8rem; }
.desc { margin-top: 1.92rem; font-size: 1.345rem; line-height: 1.84rem; color: #6f6f6f; }
.desc, .item p { letter-spacing: .025em; }
.r-geo { margin-top: 2.65rem; gap: 3.65rem; }
.pick { display: flex; align-items: center; justify-content: space-between; height: 6rem; padding: 0 1.85rem 0 2rem; background: #fff; border: .14rem solid #161616; }
.pick svg { width: 2rem; height: 2rem; }
.r-geo > svg { margin: 4.8rem 0 0 -2.1rem; }
.banner { display: flex; align-items: center; width: 109.7rem; height: 5.5rem; margin-top: 1.9rem; padding: 0 1.8rem 0 1.4rem; background: #edf5ff; border: .13rem solid #a6c8ff; border-left: .4rem solid #0043ce; }
.banner > svg { color: #0043ce; }
.banner span { margin-left: 2.55rem; letter-spacing: .018em; }
.banner .x { margin-left: auto; color: #161616; }
.profile { width: 109.35rem; height: 14.72rem; margin-top: 1.93rem; padding: .9rem 1.9rem 0; background: #fff; }
.profile-top { display: flex; align-items: center; height: 2.8rem; }
.dotted { border-bottom: .15rem dotted #8d8d8d; line-height: 1.9rem; }
.profile .dotted { margin-top: .7rem; padding-right: .2rem; font-size: 1.345rem; color: #525252; line-height: 1.8rem; }
.profile-top a { display: flex; align-items: center; justify-content: space-between; width: 14.5rem; margin-left: 1.7rem; }
.pill { height: 2.75rem; padding: 0 .9rem; border-radius: 1.4rem; font-size: 1.345rem; line-height: 2.7rem; }
.pill.dark { margin-left: auto; background: #393939; color: #f4f4f4; }
.pill.blue { background: #d0e2ff; color: #0043ce; }
.pill.grey { background: #e0e0e0; color: #393939; }
dl { display: grid; grid-template-columns: 20.1rem 22.1rem 21.2rem 21.5rem 1fr; margin-top: 2.8rem; }
dt { font-size: 2.24rem; line-height: 3rem; font-weight: 500; }
dd { margin-top: .75rem; font-size: 1.345rem; line-height: 1.9rem; color: #6f6f6f; }
.r-ram2 { margin-top: 3.69rem; }
.r-ssh2 { margin-top: 1.88rem; gap: 3.1rem; align-items: flex-end; }
.btn { display: flex; align-items: center; justify-content: space-between; height: 4.62rem; padding: 0 1.5rem 0 1.7rem; border: .13rem solid #0f62fe; background: #fff; color: #0f62fe; }
.r-ssh2 .btn { background: none; }
.r-os { margin-top: 1.84rem; gap: 3.4rem; }
.ms { display: flex; align-items: center; gap: .9rem; margin-top: -.4rem; }
.ms svg { width: 2.35rem; height: 2.45rem; }
.ver { padding-left: 2.2rem; }
.w533 label { justify-content: space-between; margin-right: -.3rem; }
.area { position: relative; height: 7.85rem; padding: 1.5rem 1.84rem; background: #fff; border-bottom: .13rem solid #8d8d8d; color: #a8a8a8; }
.area svg { position: absolute; right: .4rem; bottom: .3rem; width: .9rem; height: .9rem; stroke: #393939; }
.import { display: flex; align-items: center; gap: .6rem; height: 2.2rem; margin: 2.15rem 0 0 2rem; }
.s-storage { margin-top: 8.7rem; }
.bar { display: flex; align-items: center; justify-content: space-between; height: 4.62rem; background: #fff; }
.b-disks { width: 109.8rem; margin-top: 1.5rem; padding-left: 1.7rem; }
.after .disk-head { grid-template-columns: 23.2rem 14.7rem 14.7rem 19.8rem 1fr; width: 109.8rem; height: 5.5rem; padding-left: 2rem; }
.after .disk-row { grid-template-columns: 22.4rem 13.8rem 13.8rem 18.8rem 31.7rem 2.3rem; column-gap: .93rem; margin-top: .93rem; }
.after .disk-row > svg { margin-left: .7rem; }
h4 { font-size: 1.79rem; line-height: 2.4rem; }
h4.strong { margin-top: 2.96rem; font-weight: 600; }
.d-add { margin-top: .94rem; }
.volumes { display: flex; gap: 3.7rem; margin-top: 2.88rem; font-size: 1.79rem; }
.volume { width: 53rem; }
.volume .bar { margin-top: 1.1rem; font-size: 1.57rem; }
.vhead, .vrow { display: flex; align-items: center; height: 4.65rem; padding: 0 .8rem 0 1.9rem; }
.vhead { background: #e0e0e0; }
.vrow { height: 4.5rem; background: #fff; color: #393939; }
.vrow svg { margin-left: auto; color: #161616; }
.vhead > :first-child { width: 12.1rem; }
.vrow span:nth-last-child(3) { width: 12.1rem; }
.l-iface { margin-top: 2.82rem; gap: 1rem; }
.radios { display: flex; align-items: center; height: 2.4rem; letter-spacing: .012em; }
.radios i { margin-right: 1rem; border-color: #161616; margin-left: .15rem; }
.radios i:not(:first-child) { margin-left: 2rem; }
.r-1 { margin-top: 1rem; }
.l-port { margin-top: 2.65rem; }
.r-2 { height: 2.7rem; margin-top: .8rem; }
.radios .auto { margin-right: .7rem; }
.r-speed { margin-top: 2.49rem; gap: 3.7rem; }
.after .g-1 { margin-top: 3.83rem; color: #393939; }
.after .g-2 { margin-top: 2.72rem; color: #393939; }
.group { display: flex; flex-direction: column; gap: .23rem; width: 109.7rem; margin-top: .95rem; }
.item { background: #fff; padding-left: 1.9rem; }
.item-head { display: flex; align-items: center; height: 5.53rem; padding-right: 1.8rem; }
.item-head b { margin-right: auto; }
.item-head > svg { margin: 0 1.8rem 0 1.9rem; }
.item-head u { width: .2rem; height: 3.7rem; background: #e0e0e0; margin-right: 1.65rem; }
.item-head s { position: relative; width: 3.75rem; height: 1.95rem; border-radius: 1rem; background: #8d8d8d; }
.item-head s::before { content: ""; position: absolute; left: .35rem; top: .35rem; width: 1.25rem; height: 1.25rem; border-radius: 50%; background: #fff; }
.item-head .yes { background: #24a148; }
.item-head .yes::before { left: 2.15rem; }
.yes svg { position: absolute; left: 2.15rem; top: .35rem; width: 1.25rem; height: 1.25rem; fill: none; stroke: #24a148; stroke-width: 1.5; }
.item p { font-size: 1.345rem; line-height: 1.84rem; color: #8d8d8d; }
.price { margin-top: .85rem; padding-bottom: 1.9rem; }
.backup { width: 33.1rem; height: 3.7rem; margin-top: 1rem; background: #f4f4f4; letter-spacing: .016em; }
.item:has(.backup) { padding-bottom: 1.92rem; }

/* redesigned summary */
.after aside { padding: 2.1rem 3.8rem 0 3.65rem; width: 40.6rem; background: #252525; border-left: .1rem solid #6f6f6f; }
.after aside a { color: #6ea6ff; }
.sum-head { display: flex; justify-content: space-between; height: 4.35rem; border-bottom: .13rem solid #393939; }
.sum-head a { margin-top: .8rem; }
.after .line-item { justify-content: flex-start; }
.after .line-item b { margin-left: auto; }
.after .line-item em { width: 1.9rem; height: 1.8rem; margin: .2rem .9rem 0 0; line-height: 1.7rem; font-size: 1.345rem; border-radius: .2rem; }
.after .details { margin-left: 2.8rem; line-height: 1.74rem; }
.q-1 { margin-top: 2.47rem; } .q-2 { margin-top: 2.65rem; } .q-3 { margin-top: 2.79rem; } .q-4 { margin-top: 2.9rem; }
.after .d-1 { margin-top: .9rem; } .after .d-2 { margin-top: .55rem; } .after .d-3 { margin-top: .7rem; }
.promo-label { margin-top: 2.78rem; font-size: 1.345rem; line-height: 1.84rem; color: #a8a8a8; }
.after .code { width: 33.1rem; margin-top: 1.05rem; line-height: 4.5rem; color: #6f6f6f; }
.agree { display: flex; align-items: center; height: 2.2rem; margin-top: 4.4rem; letter-spacing: .008em; }
.agree svg { width: 1.7rem; height: 1.7rem; margin: 0 .9rem 0 .1rem; border: .18rem solid #fff; border-radius: .2rem; background: #161616; fill: none; stroke: #fff; stroke-width: 1.6; }
.after .total { margin-top: 13.35rem; padding-top: 2.9rem; height: 5.1rem; border-top: .13rem solid #393939; }
.after .estimated { margin-top: .2rem; color: #8d8d8d; }
.after .actions { margin-top: 3.7rem; gap: 1.84rem; }
```
